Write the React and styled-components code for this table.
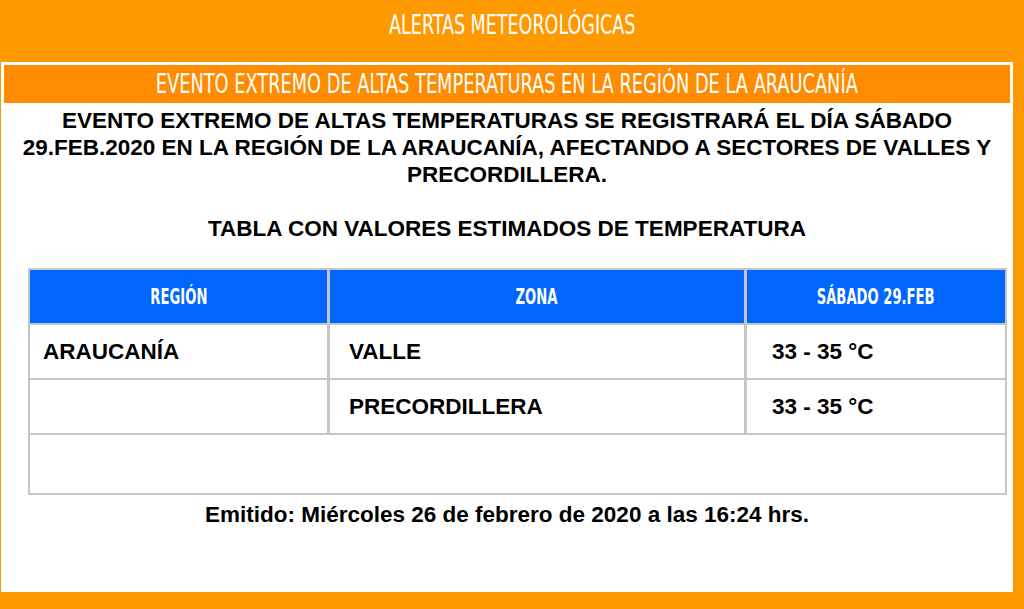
import React from 'react';
import styled, { createGlobalStyle } from 'styled-components';

const GlobalStyle = createGlobalStyle`
  html, body {
    margin: 0;
    padding: 0;
    background: #ff9900;
  }
  body {
    font-family: "Liberation Sans", Arial, sans-serif;
    color: #000;
  }
`;

const Page = styled.div`
  width: 1024px;
  height: 609px;
  background: #ff9900;
  display: flex;
  flex-direction: column;
  overflow: hidden;
`;

// narrow headline face: squeeze DejaVu Condensed to match the original display font
const Narrow = styled.span`
  display: inline-block;
  white-space: nowrap;
  font-family: "DejaVu Sans Condensed", "DejaVu Sans", sans-serif;
  font-stretch: condensed;
  transform: scaleX(${p => p.$scale || 0.75});
`;

const TopTitle = styled.h1`
  margin: 0;
  height: 62px;
  display: flex;
  align-items: center;
  justify-content: center;
  color: #fff;
  font-weight: 400;
  font-size: 26px;
  padding-bottom: 12px;
  box-sizing: border-box;
`;

const Panel = styled.div`
  margin-left: 1px;
  width: 1012px;
  height: 530px;
  box-sizing: border-box;
  background: #fff;
  padding: 3px 3px 0;
  display: flex;
  flex-direction: column;
`;

const SubBar = styled.h2`
  margin: 0;
  height: 38px;
  background: #ff8c00;
  color: #fff;
  font-weight: 400;
  font-size: 26px;
  display: flex;
  align-items: center;
  justify-content: center;
  overflow: hidden;
`;

const Lead = styled.p`
  margin: 4px 0 0;
  padding: 0 8px;
  text-align: center;
  font-weight: 700;
  font-size: 22.5px;
  line-height: 27px;
  text-transform: uppercase;
`;

const TableTitle = styled.h3`
  margin: 27px 0 0;
  text-align: center;
  font-weight: 700;
  font-size: 22.5px;
  line-height: 27px;
`;

const Grid = styled.div`
  margin: 26px 3px 0 24px;
  display: grid;
  grid-template-columns: 297px 414px 258px;
  grid-template-rows: 53px 53px 53px 58px;
  gap: 2px 3px;
  padding: 2px;
  background: #c6c6c6;
`;

const HeadCell = styled.div`
  background: #0066ff;
  color: #fff;
  font-weight: 700;
  font-size: 22px;
  display: flex;
  align-items: center;
  justify-content: center;
  overflow: hidden;
`;

const Cell = styled.div`
  background: #fff;
  display: flex;
  align-items: center;
  padding-left: ${p => p.$indent || 13}px;
  font-weight: 700;
  font-size: 22.5px;
  grid-column: ${p => (p.$full ? '1 / -1' : 'auto')};
`;

const Issued = styled.p`
  margin: 6px 0 0;
  text-align: center;
  font-weight: 700;
  font-size: 22.5px;
  line-height: 27px;
`;

export default function App() {
  return (
    <Page>
      <GlobalStyle />
      <TopTitle>
        <Narrow>ALERTAS METEOROLÓGICAS</Narrow>
      </TopTitle>
      <Panel>
        <SubBar>
          <Narrow $scale={0.76}>EVENTO EXTREMO DE ALTAS TEMPERATURAS EN LA REGIÓN DE LA ARAUCANÍA</Narrow>
        </SubBar>
        <Lead>
          Evento extremo de altas temperaturas se registrará el día sábado 29.feb.2020 en la región de la
          Araucanía, afectando a sectores de valles y precordillera.
        </Lead>
        <TableTitle>TABLA CON VALORES ESTIMADOS DE TEMPERATURA</TableTitle>
        <Grid>
          <HeadCell><Narrow $scale={0.665}>REGIÓN</Narrow></HeadCell>
          <HeadCell><Narrow $scale={0.665}>ZONA</Narrow></HeadCell>
          <HeadCell><Narrow $scale={0.665}>SÁBADO 29.FEB</Narrow></HeadCell>
          <Cell>ARAUCANÍA</Cell>
          <Cell $indent={19}>VALLE</Cell>
          <Cell $indent={25}>33 - 35 °C</Cell>
          <Cell />
          <Cell $indent={19}>PRECORDILLERA</Cell>
          <Cell $indent={25}>33 - 35 °C</Cell>
          <Cell $full />
        </Grid>
        <Issued>Emitido: Miércoles 26 de febrero de 2020 a las 16:24 hrs.</Issued>
      </Panel>
    </Page>
  );
}
